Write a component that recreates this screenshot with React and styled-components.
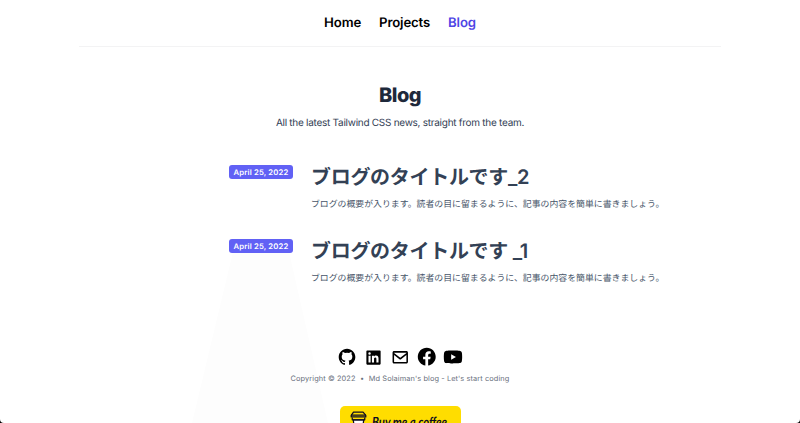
import React from "react";
import styled, { createGlobalStyle } from "styled-components";
import { BiLogoGithub, BiLogoLinkedinSquare, BiEnvelope, BiLogoFacebookCircle, BiLogoYoutube } from "react-icons/bi";

const Global = createGlobalStyle`
  * { box-sizing: border-box; margin: 0; padding: 0; }
  html, body { width: 100%; height: 423px; overflow: hidden; background: #000; }
  body { font-family: Inter, "Noto Sans CJK JP", sans-serif; text-rendering: geometricPrecision; }
`;
const Page = styled.div`
  position: relative;
  isolation: isolate;
  height: 423px;
  overflow: hidden;
  background: #fff;
  border-radius: 0 0 4px 4px;
`;
const Glow = styled.div`
  position: absolute;
  z-index: -1;
  left: 192px;
  top: 252px;
  width: 136px;
  height: 171px;
  background: #fdfdfd;
  clip-path: polygon(41px 0, 97px 0, 100% 100%, 0 100%);
`;
const Nav = styled.nav`
  width: 642px;
  height: 47px;
  margin: 0 auto;
  display: flex;
  justify-content: center;
  gap: 18px;
  border-bottom: 1px solid #f3f3f4;
`;
const NavLink = styled.a`
  font-size: 13.2px;
  font-weight: 600;
  line-height: 47px;
  letter-spacing: -0.15px;
  color: ${(p) => (p.$active ? "#4f46e5" : "#000")};
`;
const Heading = styled.header`
  height: 118px;
  padding-top: 34px;
  text-align: center;
`;
const Title = styled.h1`
  font-size: 20px;
  line-height: 28px;
  font-weight: 800;
  letter-spacing: -0.5px;
  color: #1e293b;
`;
const Lead = styled.p`
  margin-top: 5px;
  font-size: 10px;
  line-height: 18px;
  letter-spacing: -0.27px;
  color: #334155;
`;
const Posts = styled.main`
  width: 460px;
  margin-left: 229px;
  height: 183px;
`;
const Post = styled.article`
  display: flex;
  align-items: flex-start;
  gap: 18px;
  height: 73.5px;
`;
const DateTag = styled.time`
  width: 64px;
  height: 14px;
  border-radius: 3px;
  background: #6161f5;
  color: #fff;
  font-size: 7.7px;
  font-weight: 600;
  line-height: 15px;
  text-align: center;
  letter-spacing: 0.16px;
  white-space: nowrap;
`;
const PostTitle = styled.h2`
  height: 31px;
  line-height: 24px;
  font-size: 20px;
  font-weight: 600;
  letter-spacing: -0.3px;
  color: #334155;
  white-space: nowrap;
`;
const Summary = styled.p`
  font-size: 8.9px;
  line-height: 18px;
  color: #475569;
  white-space: nowrap;
`;
const Footer = styled.footer`
  display: flex;
  flex-direction: column;
  align-items: center;
`;
const Social = styled.div`
  display: flex;
  justify-content: center;
  align-items: center;
  height: 18px;
`;
const IconLink = styled.a`
  display: flex;
  justify-content: center;
  width: 26.7px;
  color: #000;
  svg { flex: none; width: ${(p) => p.$size}px; height: ${(p) => p.$size}px; }
`;
const Copyright = styled.p`
  display: flex;
  gap: 4.5px;
  margin-top: 7px;
  font-size: 7.4px;
  line-height: 12px;
  letter-spacing: 0.09px;
  color: #6b7280;
`;
const Coffee = styled.a`
  display: flex;
  gap: 5px;
  width: 121px;
  height: 34px;
  margin-top: 21px;
  padding: 5px 0 0 10px;
  border-radius: 5px;
  background: #ffdd00;
  color: #0d0c22;
  svg { flex: none; }
`;
const CoffeeText = styled.span`
  flex: none;
  height: 22px;
  font-family: Lato, sans-serif;
  font-size: 14px;
  font-weight: 700;
  font-style: italic;
  line-height: 22px;
  white-space: nowrap;
  transform: scaleX(0.81);
  transform-origin: left;
`;

const posts = ["ブログのタイトルです_2", "ブログのタイトルです _1"];

const socials = [
  [BiLogoGithub, 20],
  [BiLogoLinkedinSquare, 19],
  [BiEnvelope, 18.5],
  [BiLogoFacebookCircle, 21.5],
  [BiLogoYoutube, 22],
];

export default function App() {
  return (
    <>
      <Global />
      <Page>
        <Glow />
        <Nav>
          <NavLink>Home</NavLink>
          <NavLink>Projects</NavLink>
          <NavLink $active>Blog</NavLink>
        </Nav>
        <Heading>
          <Title>Blog</Title>
          <Lead>All the latest Tailwind CSS news, straight from the team.</Lead>
        </Heading>
        <Posts>
          {posts.map((title) => (
            <Post key={title}>
              <DateTag>April 25, 2022</DateTag>
              <div>
                <PostTitle>{title}</PostTitle>
                <Summary>ブログの概要が入ります。読者の目に留まるように、記事の内容を簡単に書きましょう。</Summary>
              </div>
            </Post>
          ))}
        </Posts>
        <Footer>
          <Social>
            {socials.map(([Icon, size], i) => (
              <IconLink key={i} $size={size}><Icon /></IconLink>
            ))}
          </Social>
          <Copyright>
            <span>Copyright © 2022</span>
            <span>•</span>
            <span>Md Solaiman's blog - Let's start coding</span>
          </Copyright>
          <Coffee>
            <svg width="17" height="25" viewBox="0 0 16 24" fill="none" stroke="#0d0c22" strokeWidth="1.2" strokeLinejoin="round">
              <path d="M3 8.5 4.6 22h6.8L13 8.5Z" fill="#fff" />
              <path d="M1 4.2 3.2 1h9.2L15 4.2v1.5H1Z" fill="#ffdd00" />
              <path d="M1 4h14M2 6.2v2.2h12V6.2" />
            </svg>
            <CoffeeText>Buy me a coffee</CoffeeText>
          </Coffee>
        </Footer>
      </Page>
    </>
  );
}
